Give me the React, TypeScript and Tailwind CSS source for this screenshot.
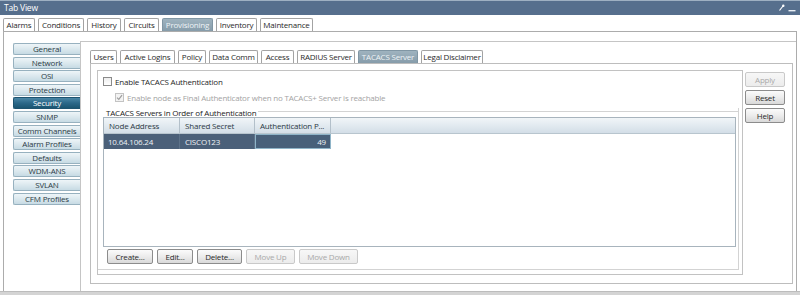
import React from "react";

const topTabs = [
  { label: "Alarms", w: "w-[32px]" },
  { label: "Conditions", w: "w-[46px]" },
  { label: "History", w: "w-[34px]" },
  { label: "Circuits", w: "w-[35px]" },
  { label: "Provisioning", w: "w-[51px]", active: true },
  { label: "Inventory", w: "w-[41px]" },
  { label: "Maintenance", w: "w-[53px]" },
];

const subTabs = [
  { label: "Users", w: "w-[27px]" },
  { label: "Active Logins", w: "w-[55px]" },
  { label: "Policy", w: "w-[28px]" },
  { label: "Data Comm", w: "w-[49px]" },
  { label: "Access", w: "w-[33px]" },
  { label: "RADIUS Server", w: "w-[58px]" },
  { label: "TACACS Server", w: "w-[60px]", active: true },
  { label: "Legal Disclaimer", w: "w-[62px]" },
];

const navItems = [
  "General",
  "Network",
  "OSI",
  "Protection",
  "Security",
  "SNMP",
  "Comm Channels",
  "Alarm Profiles",
  "Defaults",
  "WDM-ANS",
  "SVLAN",
  "CFM Profiles",
];

const Tab = ({ label, w, active }: { label: string; w: string; active?: boolean }) => (
  <div
    className={`${w} h-[13px] flex items-center justify-center rounded-t-[2px] border border-b-0 ${
      active
        ? "bg-gradient-to-b from-[#9fb3bf] to-[#869caa] border-[#8096a4] text-[#eef3f6]"
        : "bg-white border-[#a3a3a3] text-[#2a2a2a]"
    }`}
  >
    {label}
  </div>
);

const Button = ({ label, w, disabled }: { label: string; w: string; disabled?: boolean }) => (
  <div
    className={`${w} h-[15px] flex items-center justify-center rounded-[2px] border ${
      disabled
        ? "border-[#c9c9c9] bg-gradient-to-b from-[#f7f7f7] to-[#ececec] text-[#a9a9a9]"
        : "border-[#8c8c8c] bg-gradient-to-b from-[#fbfbfb] via-[#ececec] to-[#d9d9d9] text-[#2a2a2a]"
    }`}
  >
    {label}
  </div>
);

const CheckBox = ({ checked, disabled }: { checked?: boolean; disabled?: boolean }) => (
  <div
    className={`w-[9px] h-[9px] border flex items-center justify-center ${
      disabled ? "border-[#c3c3c3] bg-[#f3f3f3]" : "border-[#8a8a8a] bg-gradient-to-b from-[#eeeeee] to-white"
    }`}
  >
    {checked && (
      <svg width="7" height="7" viewBox="0 0 7 7">
        <path d="M1 3.6 L2.8 5.4 L6 1.2" fill="none" stroke="#9d9d9d" strokeWidth="1.2" />
      </svg>
    )}
  </div>
);

export default function App() {
  return (
    <div className="w-[800px] h-[295px] overflow-hidden bg-white flex flex-col font-['Open_Sans','Noto_Sans',sans-serif] text-[8px] tracking-[-0.2px] leading-none">
      {/* window title */}
      <div className="h-[15px] shrink-0 bg-[#566f8d] border-t border-[#9eb0c2] flex items-center justify-between pl-[4px] pr-[4px] text-white">
        <span className="text-[8.5px]">Tab View</span>
        <div className="flex items-end gap-[3px] pb-[1px]">
          <svg width="7" height="8" viewBox="0 0 7 8">
            <path d="M1.5 6.5 L5 2" stroke="#ffffff" strokeWidth="1.2" />
            <circle cx="5.3" cy="1.8" r="1.2" fill="#ffffff" />
          </svg>
          <svg width="8" height="8" viewBox="0 0 8 8">
            <rect x="0.5" y="6" width="7" height="1.4" fill="#e8eef4" />
          </svg>
        </div>
      </div>

      {/* top tabs */}
      <div className="h-[16px] shrink-0 flex items-end gap-[3px] pl-[3px]">
        {topTabs.map((t) => (
          <Tab key={t.label} {...t} />
        ))}
      </div>

      {/* content */}
      <div className="flex-1 ml-[3px] mr-[3px] border-t border-l border-r border-[#acacac] flex min-h-0">
        {/* left nav */}
        <div className="w-[76px] shrink-0 pl-[9px] pt-[11px] flex flex-col gap-[1.6px]">
          {navItems.map((n) => (
            <div
              key={n}
              className={`h-[12px] flex items-center justify-center rounded-l-[2px] border border-r-0 ${
                n === "Security"
                  ? "bg-gradient-to-b from-[#4a87a6] via-[#2b6889] to-[#1a5571] border-[#1d5370] text-white"
                  : "bg-gradient-to-b from-[#eef5f8] via-[#dbe8ee] to-[#c7dbe4] border-[#97b1bf] text-[#2c3b45]"
              }`}
            >
              {n}
            </div>
          ))}
        </div>

        {/* outer panel */}
        <div className="flex-1 mt-[9px] border-t border-l border-[#c5c5c5] pl-[9px] pt-[8px] flex flex-col">
          <div className="h-[13px] flex items-end gap-[3px]">
            {subTabs.map((t) => (
              <Tab key={t.label} {...t} />
            ))}
          </div>

          <div className="w-[703px] h-[221px] border border-[#bdbdbd] pl-[6px] pt-[6px] flex">
            {/* group box */}
            <div className="w-[646px] h-[205px] border border-[#c2c2c2] flex flex-col">
              <div className="pt-[6px] pl-[5px] flex items-center gap-[3px] text-[#1f1f1f]">
                <CheckBox />
                <span>Enable TACACS Authentication</span>
              </div>
              <div className="mt-[7px] pl-[17px] flex items-center gap-[3px] text-[#a3a3a3]">
                <CheckBox checked disabled />
                <span>Enable node as Final Authenticator when no TACACS+ Server is reachable</span>
              </div>

              {/* titled box */}
              <div className="mt-[6px] w-[641px] h-[162px] border-r border-b border-[#d3d3d3] flex flex-col">
                <div className="h-[9px] flex items-center pl-[8px] gap-[2px]">
                  <span className="text-[#1a1a1a]">TACACS Servers in Order of Authentication</span>
                  <div className="flex-1 border-t border-[#d3d3d3] mt-[-2px]" />
                </div>

                {/* table */}
                <div className="ml-[5px] w-[633px] h-[130px] border border-[#a8b4bd] bg-white flex flex-col">
                  <div className="h-[16px] flex bg-gradient-to-b from-[#f1f5f8] via-[#e2eaf0] to-[#d3dee7] border-b border-[#b8c5ce] text-[#2b3944]">
                    <div className="w-[76px] pl-[5px] flex items-center border-r border-[#b3c0ca]">Node Address</div>
                    <div className="w-[75px] pl-[5px] flex items-center border-r border-[#b3c0ca]">Shared Secret</div>
                    <div className="w-[76px] pl-[5px] flex items-center border-r border-[#b3c0ca]">Authentication P...</div>
                  </div>
                  <div className="h-[15px] flex text-[#eef2f5]">
                    <div className="w-[76px] pl-[4px] flex items-center bg-[#4b6079] border-r border-[#5d7289]">10.64.106.24</div>
                    <div className="w-[75px] pl-[5px] flex items-center bg-[#4b6079] border-r border-[#5d7289]">CISCO123</div>
                    <div className="w-[76px] pr-[4px] flex items-center justify-end bg-[#48607a] border border-[#8fb4c8]">49</div>
                  </div>
                </div>

                <div className="mt-[2px] pl-[9px] flex gap-[4px]">
                  <Button label="Create..." w="w-[46px]" />
                  <Button label="Edit..." w="w-[36px]" />
                  <Button label="Delete..." w="w-[45px]" />
                  <Button label="Move Up" w="w-[49px]" disabled />
                  <Button label="Move Down" w="w-[59px]" disabled />
                </div>
              </div>
            </div>

            {/* right buttons */}
            <div className="ml-[2px] mt-[2px] w-[40px] flex flex-col gap-[3px]">
              <Button label="Apply" w="w-[40px]" disabled />
              <Button label="Reset" w="w-[40px]" />
              <Button label="Help" w="w-[40px]" />
            </div>
          </div>
        </div>
      </div>

      {/* bottom edge */}
      <div className="h-[4px] shrink-0 bg-[#d4d4d4] border-t border-[#bcbcbc]" />
    </div>
  );
}
